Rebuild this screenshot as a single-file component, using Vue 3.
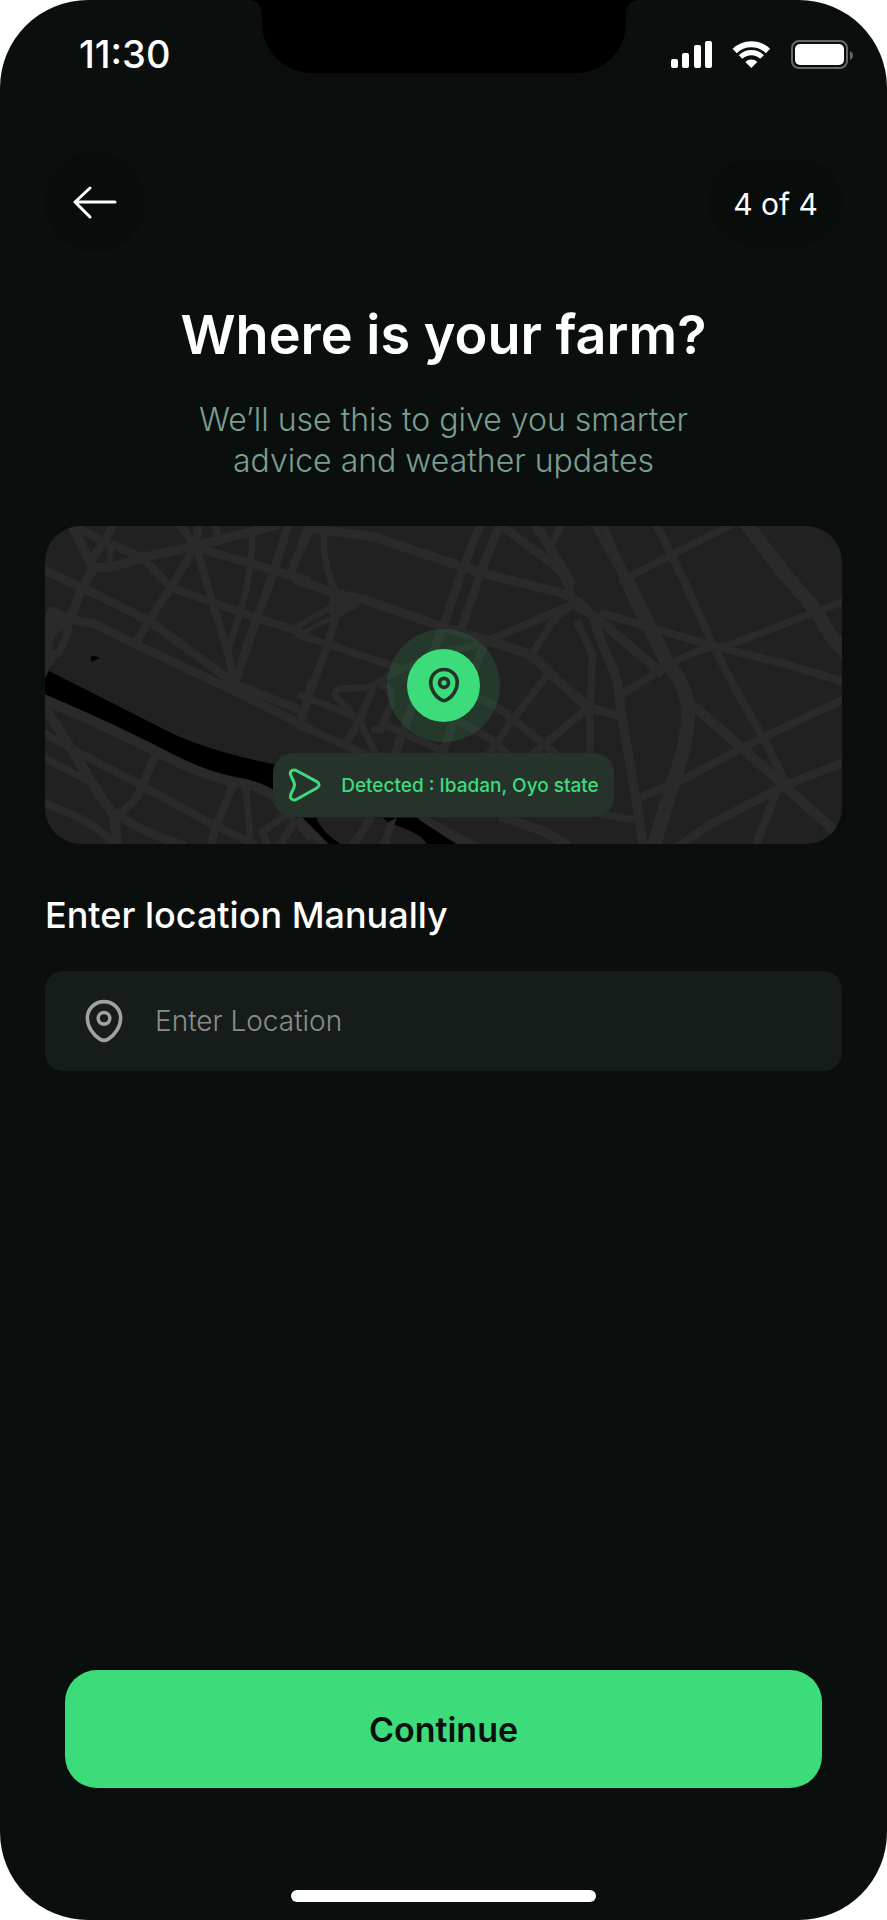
<template>
  <div class="screen">
    <!-- Status bar -->
    <div class="status-bar">
      <span class="status-time">11:30</span>
      <svg class="notch" viewBox="0 0 392 73" aria-hidden="true">
        <path d="M0 0C9 0 14 5 14 14V23C14 51 36 73 64 73H328C356 73 378 51 378 23V14C378 5 383 0 392 0Z" />
      </svg>
      <div class="status-icons">
        <svg width="41" height="27" viewBox="0 0 41 27" fill="#fff" aria-hidden="true">
          <rect v-for="bar in signalBars" :key="bar.x" :x="bar.x" :y="27 - bar.height" width="7" :height="bar.height" rx="2" />
        </svg>
        <svg class="wifi" width="39" height="27" viewBox="865 120 117 81" fill="none" stroke="#fff" aria-hidden="true">
          <path d="M873 150A71 71 0 0 1 973 150" stroke-width="18" />
          <path d="M891 168A45 45 0 0 1 955 168" stroke-width="16" />
          <path d="M923 201L905 183A26 26 0 0 1 941 183Z" fill="#fff" stroke="none" />
        </svg>
        <svg width="62" height="29" viewBox="0 0 62 29" fill="none" aria-hidden="true">
          <rect x="1" y="1" width="55" height="27" rx="7" stroke="#656867" stroke-width="2" />
          <rect x="4" y="4" width="49" height="21" rx="5" fill="#fff" />
          <path d="M59 11C63 13 63 18 59 20Z" fill="#656867" />
        </svg>
      </div>
    </div>

    <!-- Step header -->
    <header class="top-row">
      <button class="back-btn" type="button" aria-label="Back">
        <svg width="44" height="33" viewBox="0 0 44 33" fill="none" stroke="#fff" stroke-width="3" stroke-linecap="round" stroke-linejoin="round">
          <path d="M42 16H2M17 2L2 16L17 31" />
        </svg>
      </button>
      <span class="step-pill">{{ step }} of {{ totalSteps }}</span>
    </header>

    <main class="content">
      <h1 class="title">Where is your farm?</h1>
      <p class="subtitle">We’ll use this to give you smarter<br />advice and weather updates</p>

      <!-- Map preview -->
      <div class="map-card">
        <svg class="map" viewBox="18 15 2388 954" preserveAspectRatio="xMidYMid slice" aria-hidden="true">
          <path d="M18 285L30 260Q38 252 50 258L95 285L100 330L72 400L45 420L18 465Z" fill="#2a2a2a" />
          <path d="M40 388Q38 350 70 325Q78 340 52 385Z" fill="#212121" />
          <g class="roads">
            <path v-for="(road, i) in roads" :key="i" :d="road.d" :stroke-width="road.width" :transform="`translate(${road.x} 0)`" />
          </g>
          <path d="M880 210L985 235L890 295L860 270Z" fill="#2a2a2a" />
          <g fill="#000">
            <path d="M30 450L400 637Q450 662 560 695Q640 718 710 730L800 760V880L770 890Q740 850 705 808Q670 782 590 768Q500 750 410 703Q220 605 18 520V475Z" />
            <path d="M155 408Q165 401 182 411L158 423Z" />
            <path d="M790 890H830Q850 935 905 970H870Z" />
            <path d="M1030 890H1130L1256 972H1165Q1150 945 1110 928L1065 910L1072 890L1045 903Z" />
          </g>
        </svg>
        <div class="pin-halo">
          <div class="pin">
            <svg width="40" height="40" viewBox="0 -0.7 24 24" fill="none" stroke="#25332b" stroke-width="2.2" aria-hidden="true">
              <path :d="pinPath" />
              <circle cx="12" cy="10" r="2.7" />
            </svg>
          </div>
        </div>
        <div class="detected">
          <svg width="33" height="34" viewBox="92 84 98 102" fill="none" stroke="#3ddc7b" stroke-width="9" stroke-linejoin="round" aria-hidden="true">
            <path d="M99 103C96 92 108 86 119 93L178 125C187 130 187 139 178 144L119 177C108 184 96 178 99 166C101 156 111 146 111 135C111 124 102 113 99 103Z" />
          </svg>
          <span>Detected : {{ detectedLocation }}</span>
        </div>
      </div>

      <!-- Manual entry -->
      <label class="field-label" for="location">Enter location Manually</label>
      <div class="field">
        <svg width="50" height="50" viewBox="0 -0.7 24 24" fill="none" stroke="#a0a2a1" stroke-width="1.7" aria-hidden="true">
          <path :d="pinPath" />
          <circle cx="12" cy="10" r="2.8" />
        </svg>
        <input id="location" v-model="location" type="text" placeholder="Enter Location" />
      </div>
    </main>

    <footer class="footer">
      <button class="continue-btn" type="button">Continue</button>
      <div class="home-indicator"></div>
    </footer>
  </div>
</template>

<script setup>
import { ref } from 'vue'

const step = 4
const totalSteps = 4
const location = ref('')
const detectedLocation = ref('Ibadan, Oyo state')

const signalBars = [
  { x: 0, height: 9 },
  { x: 11, height: 15 },
  { x: 23, height: 23 },
  { x: 34, height: 27 }
]

const pinPath = 'M4 10C4 5.4 7.6 2 12 2C16.4 2 20 5.4 20 10C20 13.9 17.2 18.1 14 20C12.7 20.8 11.3 20.8 10 20C6.8 18.1 4 13.9 4 10Z'

// road lines by map section: west, centre, east
const west = [
  ['M0 142L130 200L330 300L590 490L790 570', 26],
  ['M95 5L150 120L165 140L130 200L90 300', 28],
  ['M105 15L190 60L310 110L395 200L650 290L760 325L810 350', 24],
  ['M160 140Q220 145 310 110L470 75L640 32L720 10', 28],
  ['M228 5L190 70L150 125', 26],
  ['M215 75L210 125', 18],
  ['M470 75L395 200L345 275L290 365', 24],
  ['M470 75L520 245L565 390L585 480', 24],
  ['M415 5L470 75L478 5', 24],
  ['M525 5L535 45', 20],
  ['M470 80L710 150L810 182', 26],
  ['M640 30Q640 140 605 270L565 390', 20],
  ['M748 5L705 150L650 300L585 490', 26],
  ['M808 15L755 160', 24],
  ['M90 295L170 310L300 375L585 510L820 628', 26],
  ['M785 605L820 470', 22],
  ['M0 530L130 585L350 690Q470 755 590 785Q660 785 720 840L820 950', 30],
  ['M15 555L75 650L120 720Q170 810 225 880L235 980', 30],
  ['M0 628L120 695L310 795L530 915L650 970', 24],
  ['M0 702L145 778', 22],
  ['M355 690L310 790Q290 850 235 880', 24],
  ['M0 838L110 885Q170 915 225 965', 24],
  ['M235 880Q300 930 440 975', 26],
  ['M585 785L530 915L512 980', 24],
  ['M620 800L635 980', 20],
  ['M750 875L670 930L685 980', 22],
  ['M775 890L715 980', 24]
]

const centre = [
  ['M-20 135L40 10', 24],
  ['M20 20L230 50L480 135L560 160L780 215Q820 225 880 285', 28],
  ['M75 35Q65 120 110 215', 20],
  ['M-15 175L110 218L200 238L430 318L570 360L690 400L865 560', 28],
  ['M110 250L-20 325', 18],
  ['M170 255L-10 345', 14],
  ['M110 285L85 370L-5 615', 24],
  ['M-10 340L85 370L310 445L390 405L540 370', 22],
  ['M545 0L490 145L430 318L300 660L285 710', 26],
  ['M605 0L545 150L485 325', 26],
  ['M600 10L740 115Q815 165 815 245', 26],
  ['M700 0L750 80L820 195', 28],
  ['M792 5L750 75', 22],
  ['M820 250L570 358', 24],
  ['M820 250Q760 290 745 325L695 400', 22],
  ['M745 460L640 595L560 710', 22],
  ['M520 525Q590 550 640 595L735 670L780 710', 24],
  ['M865 560L735 670L690 710', 24],
  ['M470 595L590 665L630 710', 24],
  ['M555 370L470 580L425 710', 26],
  ['M-5 520L130 570L180 600', 20],
  ['M180 600L110 530Q100 505 130 502L210 500L310 440', 20],
  ['M220 500L180 600L130 680', 24],
  ['M240 490Q285 500 275 550L245 625L215 625', 22],
  ['M0 612L200 700', 24],
  ['M250 610L430 690', 22],
  ['M180 600L235 710', 20],
  ['M-5 890L80 980', 24],
  ['M215 885Q190 940 150 980', 24],
  ['M285 885L250 980', 24],
  ['M360 890L530 980', 30],
  ['M600 885L730 930L810 975', 28]
]

const east = [
  ['M38 0L130 170', 20],
  ['M65 0L145 180', 20],
  ['M135 165L195 290L265 430Q325 500 323 570Q330 640 285 770L220 980', 42],
  ['M225 0L320 195L400 375L475 520L550 650L620 790', 24],
  ['M150 168L270 105L460 10', 22],
  ['M495 0Q580 125 710 270Q735 330 800 400', 42],
  ['M800 238L440 375L400 378Q330 395 270 430L125 520', 22],
  ['M60 275L230 325L400 375L600 425L800 485', 24],
  ['M-10 255L50 290L250 460', 28],
  ['M40 280Q60 360 90 420Q120 480 122 560L180 900L190 980', 28],
  ['M-10 300L38 400L32 560L30 710', 22],
  ['M30 560L120 585', 26],
  ['M-10 520L32 560L-10 590', 22],
  ['M800 532Q670 590 550 650L480 685L300 780L180 830', 24],
  ['M300 520L480 675L610 790L770 935', 30],
  ['M800 720L620 790L390 910L290 980', 26],
  ['M590 810L525 980', 24],
  ['M60 878L165 895', 22]
]

const toRoads = (lines, x) => lines.map(([d, width]) => ({ d, width, x }))

const roads = [...toRoads(west, 0), ...toRoads(centre, 780), ...toRoads(east, 1620)]
</script>

<style>
body {
  margin: 0;
  background: #fff;
}
</style>

<style scoped>
.screen {
  display: flex;
  flex-direction: column;
  box-sizing: border-box;
  min-height: 100vh;
  background: #0a0f0e;
  border-radius: 88px;
  overflow: hidden;
  font-family: Inter, 'Open Sans', sans-serif;
  color: #fff;
}

.status-bar {
  display: grid;
  grid-template-columns: 1fr 392px 1fr;
  align-items: start;
  height: 108px;
}

.status-time {
  padding-left: 79px;
  font-size: 38px;
  font-weight: 500;
  line-height: 108px;
}

.notch {
  display: block;
  width: 100%;
}

.status-icons {
  display: flex;
  justify-content: flex-end;
  align-items: center;
  height: 108px;
  gap: 20px;
  padding-right: 34px;
}

.top-row {
  display: flex;
  align-items: center;
  justify-content: space-between;
  margin-top: 44px;
  padding: 0 45px;
}

.back-btn {
  display: flex;
  align-items: center;
  justify-content: center;
  width: 100px;
  height: 100px;
  padding: 0;
  border: none;
  border-radius: 50%;
  background: #080c0b;
  cursor: pointer;
}

.step-pill {
  padding: 4px 24px 0;
  border-radius: 44px;
  background: #080c0b;
  font-size: 30px;
  line-height: 84px;
}

.content {
  display: flex;
  flex-direction: column;
  padding: 0 45px;
}

.title {
  margin: 47px 0 0;
  font-size: 54px;
  font-weight: 600;
  line-height: 72px;
  text-align: center;
}

.subtitle {
  margin: 28px 0 0;
  font-size: 32px;
  font-weight: 300;
  line-height: 41px;
  text-align: center;
  color: #7a9e90;
}

.map-card {
  position: relative;
  display: flex;
  align-items: center;
  justify-content: center;
  height: 318px;
  margin-top: 45px;
  border-radius: 36px;
  background: #212121;
  overflow: hidden;
}

.map {
  position: absolute;
  inset: 0;
  width: 100%;
  height: 100%;
}

.roads {
  fill: none;
  stroke: #2a2a2a;
  stroke-linejoin: round;
}

.pin-halo {
  position: relative;
  display: flex;
  padding: 20px;
  border-radius: 50%;
  background: rgba(61, 220, 123, 0.12);
}

.pin {
  display: flex;
  align-items: center;
  justify-content: center;
  width: 73px;
  height: 73px;
  border-radius: 50%;
  background: #3ddc7b;
}

.detected {
  position: absolute;
  bottom: 27px;
  display: flex;
  align-items: center;
  gap: 20px;
  height: 64px;
  padding: 0 15px;
  border-radius: 20px;
  background: #25332b;
  color: #3ddc7b;
  font-size: 19px;
  font-weight: 500;
  white-space: nowrap;
}

.field-label {
  margin-top: 47px;
  font-size: 36px;
  font-weight: 500;
  line-height: 48px;
}

.field {
  display: flex;
  align-items: center;
  gap: 26px;
  height: 100px;
  margin-top: 32px;
  padding: 0 34px;
  border-radius: 18px;
  background: #161c1a;
}

.field input {
  flex: 1;
  min-width: 0;
  padding: 0;
  border: none;
  outline: none;
  background: transparent;
  color: #fff;
  font-family: inherit;
  font-size: 28px;
  font-weight: 300;
}

.field input::placeholder {
  color: #8a8d8c;
  opacity: 1;
}

.footer {
  display: flex;
  flex-direction: column;
  align-items: center;
  margin-top: auto;
  padding: 0 65px 18px;
}

.continue-btn {
  width: 100%;
  height: 118px;
  border: none;
  border-radius: 32px;
  background: #3ddc7b;
  color: #0a0f0e;
  font-family: inherit;
  font-size: 34px;
  font-weight: 600;
  cursor: pointer;
}

.home-indicator {
  width: 305px;
  height: 12px;
  margin-top: 102px;
  border-radius: 6px;
  background: #fff;
}
</style>
